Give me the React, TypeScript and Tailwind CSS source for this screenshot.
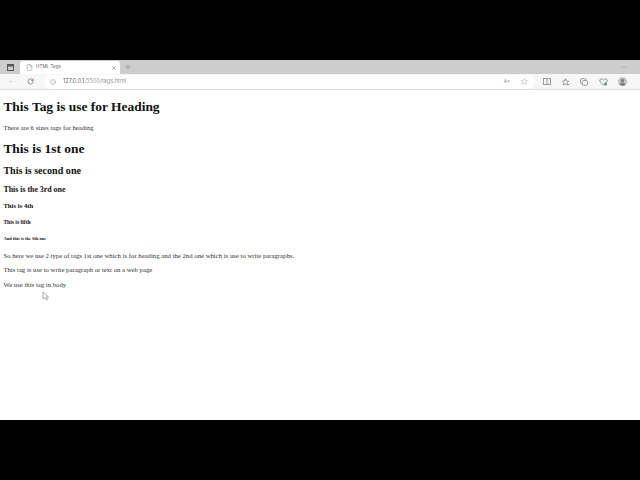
import { ArrowLeft, RotateCw, Info, Plus, X, Star, Minus, File } from 'lucide-react'

const HEADINGS = [
  { text: 'This is 1st one', className: 'mt-[9px] text-[13.44px] leading-[15.4px]' },
  { text: 'This is second one', className: 'mt-[9.4px] text-[10.08px] leading-[11.6px]' },
  { text: 'This is the 3rd one', className: 'mt-[7.9px] text-[7.86px] leading-[9px]' },
  { text: 'This is 4th', className: 'mt-[8.4px] text-[6.72px] leading-[7.7px]' },
  { text: 'This is fifth', className: 'mt-[9.3px] text-[5.58px] leading-[6.4px]' },
  { text: 'And this is the 6th one', className: 'mt-[10.5px] text-[4.5px] leading-[5.2px]' }
] as const

const Browser = () => {
  return (
    <div className="flex flex-col flex-1 bg-white">
      <div className="flex h-[14px] items-end bg-[#cdcdcd]">
        <div className="flex h-[14px] w-[20px] items-center justify-center">
          <svg width="7" height="7" viewBox="0 0 7 7">
            <rect x="0.5" y="0.5" width="6" height="6" fill="none" stroke="#555" />
            <rect x="0.5" y="0.5" width="6" height="2" fill="#555" />
          </svg>
        </div>
        <div className="flex h-[13px] w-[100px] items-center rounded-t-[3px] bg-white pl-[6px] pr-[3px]">
          <File size={7} strokeWidth={1.5} className="text-[#777777]" />
          <span className="ml-[3px] flex-1 font-['Inter',sans-serif] text-[4.6px] text-[#666666]">HTML Tags</span>
          <X size={6} strokeWidth={2} className="text-[#666666]" />
        </div>
        <div className="flex h-[14px] w-[15px] items-center justify-center">
          <Plus size={8} strokeWidth={1.25} className="text-[#777777]" />
        </div>
        <div className="flex h-[14px] flex-1 items-center justify-end pr-[13px]">
          <Minus size={6} strokeWidth={1.5} className="text-[#999999]" />
        </div>
      </div>
      <div className="flex h-[16px] items-center border-b border-[#dddddd] bg-[#f7f7f7]">
        <div className="flex w-[44px] items-center pl-[8px]">
          <ArrowLeft size={7} strokeWidth={1.5} className="text-[#d0d0d0]" />
          <RotateCw size={7} strokeWidth={2} className="ml-[12px] text-[#555555]" />
        </div>
        <div className="flex h-[14px] w-[491px] items-center rounded-full bg-white pl-[6px] pr-[7px]">
          <Info size={6} strokeWidth={1.5} className="text-[#777777]" />
          <span className="ml-[7px] flex-1 font-['Inter',sans-serif] text-[5.6px] text-[#999999]">
            <span className="text-[#666666]">127.0.0.1</span>:5500/tags.html
          </span>
          <span className="font-['Inter',sans-serif] text-[5px] text-[#999999]">A»</span>
          <Star size={7} strokeWidth={1.25} className="ml-[11px] text-[#888888]" />
        </div>
        <div className="ml-[8px] flex items-center gap-[10.5px]">
          <svg width="8" height="7" viewBox="0 0 8 7" fill="none" stroke="#888" strokeWidth="0.8">
            <rect x="0.5" y="0.5" width="7" height="6" />
            <path d="M4 0.5v6" />
          </svg>
          <svg width="8" height="8" viewBox="0 0 8 8" fill="none" stroke="#888" strokeWidth="0.8">
            <path d="M3.5 0.7l1 2.2 2.3.2-1.7 1.6.5 2.3-2.1-1.2-2.1 1.2.5-2.3L0.5 3.1l2.2-.2z" />
            <path d="M5.5 6.5h2" />
          </svg>
          <svg width="8" height="8" viewBox="0 0 8 8" fill="none" stroke="#888" strokeWidth="0.8">
            <rect x="0.5" y="0.7" width="5.5" height="5" rx="1.2" />
            <rect x="2.2" y="2.5" width="5.3" height="4.8" rx="1.2" fill="#f7f7f7" />
          </svg>
          <svg width="9" height="8" viewBox="0 0 9 8">
            <path d="M4.5 7.2L1.2 3.9C0.2 2.6 1 0.9 2.5 0.9c.9 0 1.6.5 2 1.1.4-.6 1.1-1.1 2-1.1 1.5 0 2.3 1.7 1.3 3z" fill="none" stroke="#777" strokeWidth="0.8" />
            <circle cx="6.5" cy="6" r="1.6" fill="#5a9c6e" />
          </svg>
          <svg width="9" height="9" viewBox="0 0 9 9">
            <circle cx="4.5" cy="4.5" r="4.5" fill="#c4c4c4" />
            <circle cx="4.5" cy="3.4" r="1.7" fill="#808080" />
            <path d="M1.5 7.6c.6-1.5 1.7-2.1 3-2.1s2.4.6 3 2.1c-.8.8-1.9 1.4-3 1.4s-2.2-.6-3-1.4z" fill="#808080" />
          </svg>
        </div>
      </div>
      <div className="relative flex-1 px-[3.4px] pt-[9.4px] font-['Liberation_Serif',serif] text-[#111111]">
        <h1 className="text-[13.44px] leading-[15.4px] font-bold">This Tag is use for Heading</h1>
        <p className="mt-[9px] text-[6.72px] leading-[7.7px] text-[#333333]">There are 6 sizes tags for heading</p>
        {HEADINGS.map((item) => {
          return (
            <h2 key={item.text} className={`font-bold ${item.className}`}>
              {item.text}
            </h2>
          )
        })}
        <p className="mt-[10.5px] text-[6.72px] leading-[7.7px] text-[#333333]">
          So here we use 2 type of tags 1st one which is for heading and the 2nd one which is use to write paragraphs.
        </p>
        <p className="mt-[6.72px] text-[6.72px] leading-[7.7px] text-[#333333]">This tag is use to write paragraph or text on a web page</p>
        <p className="mt-[7.5px] text-[6.72px] leading-[7.7px] text-[#333333]">We use this tag in body</p>
        <svg className="absolute left-[42px] top-[201px]" width="7" height="10" viewBox="0 0 7 10">
          <path d="M1 1v7l2-1.5L4.5 9l1-.5L4.3 6H6.5z" fill="#fff" stroke="#888" strokeWidth="0.7" />
        </svg>
      </div>
    </div>
  )
}

export default function App() {
  return (
    <div className="flex h-[480px] w-[640px] flex-col bg-black py-[60px]">
      <Browser />
    </div>
  )
}
